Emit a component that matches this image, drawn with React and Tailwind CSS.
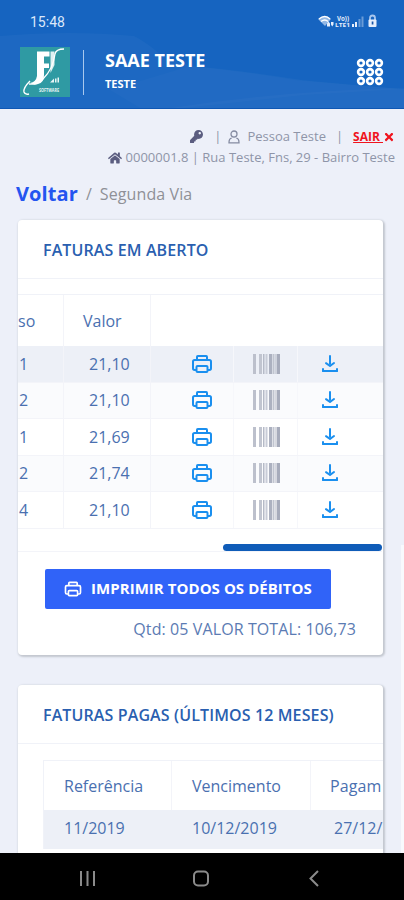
import { FaHome, FaKey, FaTimes } from "react-icons/fa";

const faturas = [
  { dig: "1", valor: "21,10" },
  { dig: "2", valor: "21,10" },
  { dig: "1", valor: "21,69" },
  { dig: "2", valor: "21,74" },
  { dig: "4", valor: "21,10" },
];

const PrinterIcon = ({ className }) => (
  <svg viewBox="0 0 24 24" fill="currentColor" className={className}>
    <path d="M19.36 7H18V5a1.92 1.92 0 0 0-1.83-2H7.83A1.92 1.92 0 0 0 6 5v2H4.64A2.66 2.66 0 0 0 2 9.67v6.66A2.66 2.66 0 0 0 4.64 19h.86a2 2 0 0 0 2 2h9a2 2 0 0 0 2-2h.86A2.66 2.66 0 0 0 22 16.33V9.67A2.66 2.66 0 0 0 19.36 7zM8 5h8v2H8zm-.5 14v-4h9v4zM20 16.33a.66.66 0 0 1-.64.67h-.86v-2a2 2 0 0 0-2-2h-9a2 2 0 0 0-2 2v2h-.86a.66.66 0 0 1-.64-.67V9.67A.66.66 0 0 1 4.64 9h14.72a.66.66 0 0 1 .64.67z" />
  </svg>
);

const DownloadIcon = () => (
  <svg viewBox="0 0 24 24" fill="currentColor" className="size-6">
    <rect x="4" y="18" width="16" height="2" rx="1" />
    <rect x="4" y="16" width="2" height="4" rx="1" />
    <rect x="18" y="16" width="2" height="4" rx="1" />
    <path d="M12 15a1 1 0 0 1-.58-.18l-4-2.82a1 1 0 0 1 1.16-1.63L12 12.76l3.4-2.56a1 1 0 0 1 1.2 1.6l-4 3a1 1 0 0 1-.6.2z" />
    <path d="M12 13a1 1 0 0 1-1-1V4a1 1 0 0 1 2 0v8a1 1 0 0 1-1 1z" />
  </svg>
);

const BarcodeIcon = () => (
  <svg viewBox="0 0 27 20" className="w-[27px] h-5">
    <rect x="0" width="3" height="20" fill="#bcc0cc" />
    <rect x="6" width="3" height="20" fill="#c1c5d0" />
    <rect x="10" width="1.5" height="20" fill="#b5bac7" />
    <rect x="12.5" width="2" height="20" fill="#c8ccd7" />
    <rect x="16" width="3" height="20" fill="#acb1c0" />
    <rect x="19.5" width="2" height="20" fill="#c0c4cf" />
    <rect x="22.5" width="1" height="20" fill="#b0b4c2" />
    <rect x="24" width="3" height="20" fill="#a6abbb" />
  </svg>
);

const Logo = () => (
  <svg viewBox="0 0 50 50" className="size-[50px]">
    <rect width="50" height="50" fill="#2f9aa3" />
    <path d="M17 4.500h12.500v5H24v7h5v4.500h-5v7q0 8-6 9-4 2-8-1 6-1 7-7z" fill="#fff" />
    <path d="M30.500 4.500h4V18l-4 8z" fill="#dff1f2" />
    <path d="M44 2q-8 0-9 5-2 15-12 25-6 6-14 5" fill="none" stroke="#fff" strokeWidth="1.300" />
    <path d="M10 34q-7 7-6 11 1 3 5 2" fill="none" stroke="#fff" strokeWidth="1.400" />
    <path d="M30 35.500l4-4v4zM35 31.500h1.500v4H35zM37.500 30.500H39v5h-1.500z" fill="#e8f5f6" />
    <text x="19" y="44.500" fontSize="6" fontWeight="700" fill="#e8f5f6" textLength="20" lengthAdjust="spacingAndGlyphs">
      SOFTWARE
    </text>
  </svg>
);

const StatusIcons = () => (
  <svg viewBox="0 0 60 16" className="w-[60px] h-4" fill="#e6eefb">
    <path d="M0 5q7-6 13 0l-6 7z" opacity=".6" />
    <path d="M1 5q6-5 11 0M3 7.500q4-3 7 0" fill="none" stroke="#fff" strokeWidth="1.300" />
    <path d="M9 9.500l1.500-2 1.500 2v3H9zM13 8h2.500v2.500L14.200 12.500 13 10.500z" />
    <text x="19" y="6.500" fontSize="6.500" fontWeight="700" textLength="12" lengthAdjust="spacingAndGlyphs">Vo))</text>
    <text x="17" y="13" fontSize="6" fontWeight="700" textLength="15" lengthAdjust="spacingAndGlyphs">LTE1</text>
    <path d="M34 10h2v3h-2zM37 8h2v5h-2z" />
    <path d="M40.500 5h2v8h-2zM43.500 2.500h2v10.500h-2z" opacity=".4" />
    <path d="M52 6V4q0-2.500 2.500-2.500T57 4v2" fill="none" stroke="#a9c6ee" strokeWidth="1.800" />
    <rect x="50.500" y="5.500" width="8" height="7.500" rx="1" />
    <rect x="53.700" y="7.500" width="1.700" height="3" fill="#1a56a8" />
  </svg>
);

const Header = () => (
  <header className="relative h-[109px] shrink-0 bg-[#1664c0] border-b border-[#0e57b4] text-white">
    <svg viewBox="0 0 404 108" className="absolute inset-0 w-full h-full">
      <path d="M0 36q70-6 134 0 12 6 26 18l30 12q50 4 112 14 60 6 102 9v19H0z" fill="#fff" opacity=".03" />
      <path d="M190 66q60 6 105 14l109 9-100 6-120 13h-44L110 90z" fill="#fff" opacity=".02" />
      <path d="M170 108q120-18 234-20v20z" fill="#fff" opacity=".025" />
    </svg>
    <div className="relative flex items-center justify-between h-[43px] pl-[30px] pr-[26px]">
      <span className="font-[Roboto] text-sm text-[#dbe8fa]">15:48</span>
      <StatusIcons />
    </div>
    <div className="relative flex items-center pl-5 pr-5 h-[58px]">
      <Logo />
      <div className="w-px h-[45px] ml-[13px] bg-[#a8c8ee]" />
      <div className="ml-[21px] mt-[-4px] grow font-bold">
        <p className="text-lg leading-[26px]">SAAE TESTE</p>
        <p className="text-[11px] leading-[21px]">TESTE</p>
      </div>
      <svg viewBox="0 0 28 28" className="size-7" fill="none" stroke="#fff" strokeWidth="2.600">
        {[5, 14, 23].map((y) =>
          [5, 14, 23].map((x) => <circle key={`${x}-${y}`} cx={x} cy={y} r="2.900" />)
        )}
      </svg>
    </div>
  </header>
);

const UserInfo = () => (
  <div className="shrink-0 pt-[17px] pr-[9px] text-[13px] leading-[21px] text-[#8f95a8]">
    <div className="flex items-center justify-end h-[21px]">
      <FaKey className="size-[13px] text-[#5b5d80]" />
      <span className="ml-[11px]">|</span>
      <svg viewBox="0 0 12 14" className="w-3 h-3.5 ml-[7px]" fill="none" stroke="#858ba1" strokeWidth="1.300">
        <circle cx="6" cy="4" r="3" />
        <path d="M3.700 8.200Q1 8.500 1 12.800h10q0-4.300-2.700-4.600" />
      </svg>
      <span className="ml-[7px]">Pessoa Teste</span>
      <span className="ml-[10px]">|</span>
      <span className="ml-[10px] font-bold text-xs text-[#f0141e] underline">SAIR&nbsp;</span>
      <FaTimes className="size-3 text-[#f0141e]" />
    </div>
    <div className="flex items-center justify-end h-[21px]">
      <FaHome className="size-[14px] mr-1 text-[#5b5d80]" />
      <span>0000001.8 | Rua Teste, Fns, 29 - Bairro Teste</span>
    </div>
  </div>
);

const Card = ({ title, className, children }) => (
  <section className={`mx-[18px] w-[365px] shrink-0 bg-white rounded-sm overflow-hidden shadow-[1px_1px_2px_1px_#c3c7cf] ${className}`}>
    <h2 className="h-[59px] pl-[25px] leading-[60px] border-b border-[#f0f2f8] font-semibold text-base tracking-[0.12px] text-[#2a5fb0]">
      {title}
    </h2>
    {children}
  </section>
);

const App = () => {
  return (
    <div className="flex flex-col w-[404px] h-[900px] overflow-hidden bg-[#edf0f9] font-['Open_Sans',sans-serif]">
      <Header />
      <main className="relative flex flex-col h-[744px] overflow-hidden">
        <UserInfo />
        <nav className="flex items-center shrink-0 h-[52px] pl-4 text-base text-[#8f9097]">
          <a className="font-bold text-xl tracking-[0.1px] text-[#2455f0]">Voltar</a>
          <span className="ml-2">/</span>
          <span className="ml-2 tracking-[0.1px]">Segunda Via</span>
        </nav>

        <Card title="FATURAS EM ABERTO" className="h-[435px]">
          <div className="mt-[15px] border-t border-[#f0f2f8] text-base text-[#4a70b0]">
            <div className="grid grid-cols-[45px_88px_1fr] h-[51px] items-center">
              <span>so</span>
              <span className="flex items-center h-full pl-[19px] border-x border-[#f3f4f9]">Valor</span>
            </div>
            {faturas.map((f, i) => (
              <div
                key={i}
                className="grid grid-cols-[45px_88px_83px_64px_1fr] h-[36.500px] items-center border-b border-[#f3f4f9] nth-2:bg-[#edf0f7] nth-3:bg-[#fafbfd] nth-5:bg-[#fafbfd]"
              >
                <span className="pl-[1px]">{f.dig}</span>
                <span className="flex items-center h-full pl-[25px] border-x border-[#f3f4f9]">{f.valor}</span>
                <span className="flex items-center h-full pl-[39px] border-r border-[#f6f7fb] text-[#1a8fef]">
                  <PrinterIcon className="size-6" />
                </span>
                <span className="flex items-center h-full pl-[19px] border-r border-[#f6f7fb]">
                  <BarcodeIcon />
                </span>
                <span className="pl-[20px] text-[#1a8fef]">
                  <DownloadIcon />
                </span>
              </div>
            ))}
          </div>
          <div className="flex justify-end mt-[15px] mr-px h-2 border-b border-[#f3f4f9]">
            <div className="w-[159px] h-[7px] rounded-full bg-[#0f5cb8]" />
          </div>
          <button className="flex items-center mt-[17px] ml-[27px] pl-[18px] w-[286px] h-[40px] rounded-xs bg-[#3063f8] text-white font-bold text-[15px] tracking-[0.05px] whitespace-nowrap">
            <PrinterIcon className="size-5 mr-2" />
            IMPRIMIR TODOS OS DÉBITOS
          </button>
          <p className="mt-2 mr-[27px] text-right text-base tracking-[0.1px] text-[#5b7bb3]">
            Qtd: 05 VALOR TOTAL: 106,73
          </p>
        </Card>

        <Card title="FATURAS PAGAS (ÚLTIMOS 12 MESES)" className="mt-[30px] h-[220px]">
          <div className="mt-4 ml-[25px] border-t border-l border-[#f0f2f8] text-base text-[#4a70b0]">
            <div className="grid grid-cols-[128px_139px_1fr] h-[49px] items-center">
              <span className="flex items-center h-full pl-5 border-r border-[#f3f4f9]">Referência</span>
              <span className="flex items-center h-full pl-5 border-r border-[#f3f4f9]">Vencimento</span>
              <span className="pl-[19px] tracking-[0.1px]">Pagam</span>
            </div>
            <div className="grid grid-cols-[128px_139px_1fr] h-[39px] pb-[3px] items-center bg-[#edf0f7]">
              <span className="pl-5">11/2019</span>
              <span className="pl-[20px]">10/12/2019</span>
              <span className="pl-[23px]">27/12/</span>
            </div>
          </div>
        </Card>
        {/* page scrollbar track */}
        <div className="absolute right-0 bottom-0 w-[3px] h-[308px] bg-[#f8f9fd]" />
      </main>

      <footer className="h-[47px] shrink-0 bg-black">
        <svg viewBox="0 0 404 47" className="w-full h-full" fill="none" stroke="#8b8b8b" strokeWidth="2">
          <path d="M81 18v15M87.500 18v15M94 18v15" />
          <rect x="194" y="18.500" width="14" height="14" rx="4" />
          <path d="M318 18l-7.500 7.500 7.500 7.500" />
        </svg>
      </footer>
    </div>
  );
};

export default App;
